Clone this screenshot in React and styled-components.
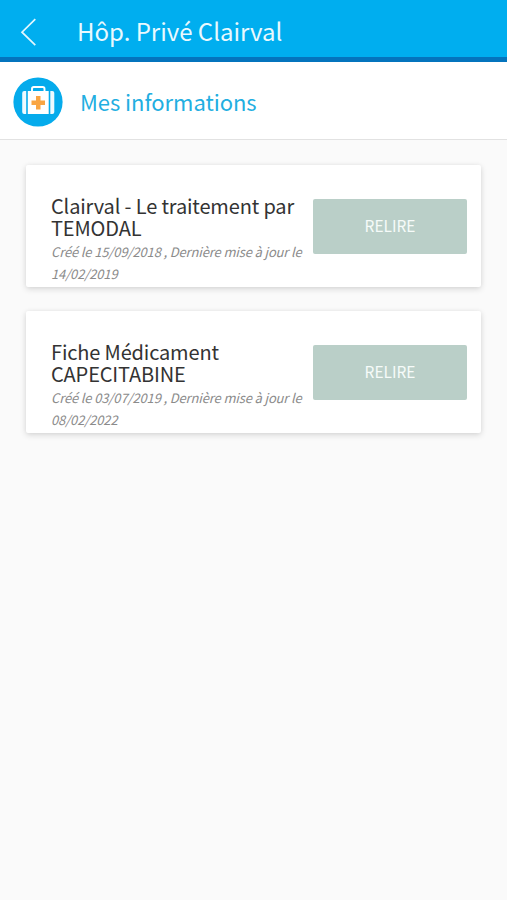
import React from "react"
import styled, { createGlobalStyle } from "styled-components"

const documents = [
  {
    id: "temodal",
    title: "Clairval - Le traitement par TEMODAL",
    created: "15/09/2018",
    updated: "14/02/2019",
  },
  {
    id: "capecitabine",
    title: "Fiche Médicament CAPECITABINE",
    created: "03/07/2019",
    updated: "08/02/2022",
  },
]

const BackIcon = () => (
  <svg width="18" height="30" viewBox="0 0 18 30" fill="none" aria-hidden="true">
    <path d="M15.3 2.2 2 15.2l13.3 12.9" stroke="#e4f7fe" strokeWidth="1.7" />
  </svg>
)

const MedkitIcon = () => (
  <svg width="50" height="50" viewBox="0 0 50 50" aria-hidden="true">
    <circle cx="25" cy="25" r="24.6" fill="#05abec" />
    <path
      d="M19 15v-3.2q0-1.8 1.8-1.8h8.9q1.8 0 1.8 1.8V15"
      fill="none"
      stroke="#fff"
      strokeWidth="1.9"
    />
    <rect x="14.8" y="14" width="20.9" height="23" fill="#fff" />
    <path d="M13.2 14v23h-2q-2 0-2-2V16q0-2 2-2z" fill="#eefaff" />
    <path d="M37.3 14v23h2q2 0 2-2V16q0-2-2-2z" fill="#eefaff" />
    <path d="M23 19h4.5v4.5H32V28h-4.5v4.5H23V28h-4.5v-4.5H23z" fill="#f9a543" />
  </svg>
)

const App = () => (
  <>
    <GlobalStyle />
    <Header>
      <BackButton aria-label="Retour">
        <BackIcon />
      </BackButton>
      <HeaderTitle>Hôp. Privé Clairval</HeaderTitle>
    </Header>

    <Section>
      <MedkitIcon />
      <SectionTitle>Mes informations</SectionTitle>
    </Section>

    <List>
      {documents.map(({ id, title, created, updated }) => (
        <Card key={id}>
          <Details>
            <Title>{title}</Title>
            <Dates>
              Créé le {created} , Dernière mise à jour le {updated}
            </Dates>
          </Details>
          <ReadButton>RELIRE</ReadButton>
        </Card>
      ))}
    </List>
  </>
)

export default App

const GlobalStyle = createGlobalStyle`
  * {
    box-sizing: border-box;
  }

  body {
    margin: 0;
    min-height: 100vh;
    background: #fafafa;
    font-family: "Noto Sans CJK JP", "Noto Sans", sans-serif;
  }
`
const Header = styled.header`
  display: flex;
  align-items: center;
  height: 62px;
  padding: 4px 0 0 20px;
  background: #00aeef;
  border-bottom: 5px solid #0474bd;
`
const BackButton = styled.button`
  display: flex;
  width: 57px;
  padding: 2px 0 0;
  border: 0;
  background: none;
`
const HeaderTitle = styled.h1`
  margin: 0;
  font-size: 24px;
  font-weight: 400;
  line-height: 36px;
  color: #e9f9fe;
`
const Section = styled.section`
  display: flex;
  align-items: center;
  height: 78px;
  padding: 2px 0 0 13px;
  background: #fff;
  border-bottom: 1px solid #e2e2e2;
`
const SectionTitle = styled.h2`
  margin: 0 0 2px 17px;
  font-size: 22px;
  font-weight: 400;
  line-height: 32px;
  letter-spacing: -0.05px;
  color: #22aee1;
`
const List = styled.main`
  display: grid;
  gap: 24px;
  padding: 25px 26px;
`
const Card = styled.article`
  display: flex;
  justify-content: space-between;
  align-items: flex-start;
  height: 122px;
  padding: 30px 14px 0 25px;
  border-radius: 2px;
  background: #fff;
  box-shadow: 0 2px 6px rgba(0, 0, 0, 0.14), 0 0 4px rgba(0, 0, 0, 0.04);
`
const Details = styled.div`
  width: 258px;
`
const Title = styled.h3`
  margin: 0;
  font-size: 20px;
  font-weight: 400;
  line-height: 22px;
  letter-spacing: -0.15px;
  color: #333;
`
const Dates = styled.p`
  margin: 2px 0 0;
  font-size: 13px;
  font-style: italic;
  line-height: 22px;
  letter-spacing: -0.14px;
  color: #8b8b8b;
`
const ReadButton = styled.button`
  flex: none;
  width: 154px;
  height: 55px;
  margin-top: 4px;
  padding: 0 0 3px;
  border: 0;
  border-radius: 2px;
  background: #bacfc8;
  font-family: inherit;
  font-size: 15.5px;
  color: #f6fbf9;
`
